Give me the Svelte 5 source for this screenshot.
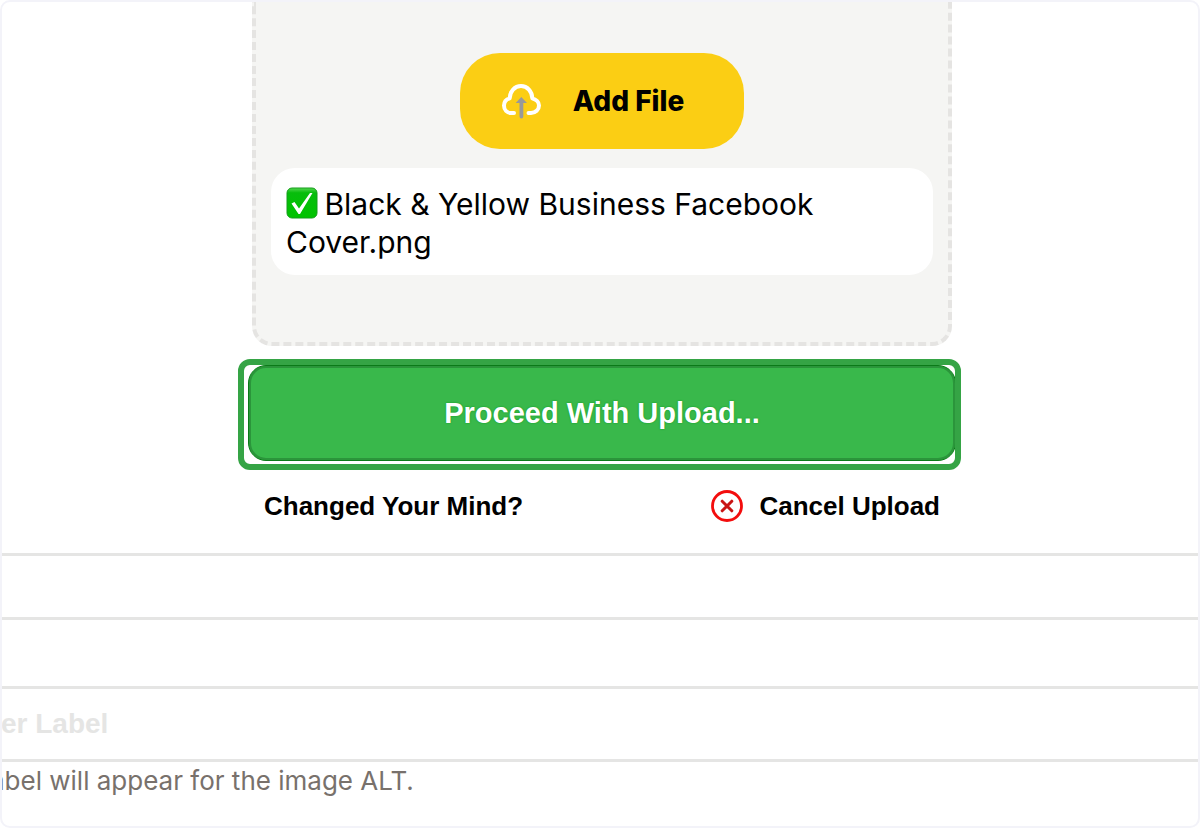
<script>
	let fileName = 'Black & Yellow Business Facebook Cover.png';
	let label = $state('');
</script>

<main>
	<section class="uploader">
		<div class="dropzone">
			<button class="add-file" type="button">
				<svg width="40" height="36" viewBox="0 0 40 36" fill="none" aria-hidden="true">
					<path d="M13 30H10.500C6 30 3 26.700 3 22.500C3 19 5.200 16.300 8.700 15.300C8.800 8.300 13.700 3 20 3C26.300 3 31.200 8.300 31.300 15.300C34.800 16.300 38 19 38 22.500C38 26.700 34.500 30 30 30H27.500" stroke="#fff" stroke-width="4" stroke-linecap="round" stroke-linejoin="round" />
					<path d="M18.500 33.500V20H14.700L20.300 14L26 20H22.300V33.500Q22.300 35.500 20.400 35.500Q18.500 35.500 18.500 33.500Z" fill="#999" />
				</svg>
				<span>Add File</span>
			</button>
			<p class="file">
				<svg class="tick" width="32" height="32" viewBox="0 0 32 32" aria-hidden="true">
					<defs>
						<linearGradient id="tickFill" x1="0" y1="0" x2="0" y2="1">
							<stop offset="0" stop-color="#54d64f" />
							<stop offset="0.16" stop-color="#07bd0c" />
							<stop offset="1" stop-color="#00c300" />
						</linearGradient>
					</defs>
					<rect x="1" y="1" width="30" height="30" rx="5" fill="url(#tickFill)" stroke="#159d1a" />
					<path d="M5.500 16.500L8.500 15L13 21.500L24 6H26.500L14 27H12.500Z" fill="#fff" />
				</svg>
				{fileName}
			</p>
		</div>
		<div class="proceed-wrap">
			<button class="proceed" type="button">Proceed With Upload...</button>
			<div class="ring"></div>
		</div>
		<div class="cancel-row">
			<span>Changed Your Mind?</span>
			<button class="cancel" type="button">
				<svg width="32" height="32" viewBox="0 0 32 32" fill="none" aria-hidden="true">
					<circle cx="16" cy="16" r="14.500" stroke="#f30d0d" stroke-width="2.800" />
					<path d="M11.200 11.200L20.800 20.800M20.800 11.200L11.200 20.800" stroke="#c91414" stroke-width="3" stroke-linecap="round" />
				</svg>
				Cancel Upload
			</button>
		</div>
	</section>
	<div class="row"></div>
	<div class="row"></div>
	<div class="row field">
		<input type="text" placeholder="er Label" aria-labelledby="hint" bind:value={label} />
	</div>
	<p class="hint" id="hint">abel will appear for the image ALT.</p>
</main>

<style>
	:global(body) {
		background: #fff;
	}

	main {
		box-sizing: border-box;
		min-height: 100vh;
		overflow: hidden;
		border: 2px solid #f3f3f9;
		border-radius: 10px;
		color: #000;
		font-family: "Liberation Sans", Arial, sans-serif;
	}

	button {
		border: 0;
		padding: 0;
		color: inherit;
		font-family: inherit;
		cursor: pointer;
	}

	.uploader {
		display: flex;
		flex-direction: column;
		align-items: center;
		padding: 0 0 31px 4px;
	}

	.dropzone {
		box-sizing: border-box;
		display: flex;
		flex-direction: column;
		align-items: center;
		gap: 19px;
		width: 100%;
		max-width: 700px;
		padding: 51px 15px 67px;
		border: 4px dashed #e5e4e2;
		border-top: 0;
		border-radius: 0 0 20px 20px;
		background: #f5f5f3;
	}

	.add-file {
		display: flex;
		align-items: center;
		gap: 32px;
		padding: 0 60px 0 41px;
		height: 96px;
		border-radius: 40px;
		background: #fbce14;
		font: 800 28px/32px Inter, sans-serif;
	}

	.file {
		box-sizing: border-box;
		width: 100%;
		margin: 0;
		padding: 17px 15px 14px;
		border-radius: 24px;
		background: #fff;
		font: 400 30px/38px Inter, sans-serif;
	}

	.tick {
		margin-right: -2px;
		vertical-align: -4px;
	}

	.proceed-wrap {
		position: relative;
		box-sizing: border-box;
		width: 100%;
		max-width: 708px;
		margin-top: 19px;
	}

	.proceed {
		display: block;
		width: 100%;
		height: 96px;
		border: 1px solid #0b7a18;
		border-radius: 18px;
		background: #39b84b;
		box-shadow: inset 0 0 0 2px #2b953b;
		color: #fff;
		font-size: 29px;
		font-weight: 700;
		text-shadow: 0 0 2px #0a9a1c;
	}

	.ring {
		position: absolute;
		inset: -6px -5px -9px -10px;
		border: 6px solid #35a445;
		border-radius: 12px;
		pointer-events: none;
	}

	.cancel-row {
		display: flex;
		align-items: center;
		justify-content: space-between;
		box-sizing: border-box;
		width: 100%;
		max-width: 700px;
		margin-top: 29px;
		padding: 0 12px;
		font-size: 26px;
		line-height: 32px;
		font-weight: 700;
	}

	.cancel {
		display: flex;
		align-items: center;
		gap: 16px;
		background: none;
		font-size: 26px;
		line-height: 32px;
		font-weight: 700;
	}

	.row {
		height: 61px;
		border-top: 3px solid #e5e5e4;
	}

	.row + .row {
		height: 66px;
	}

	.row.field {
		height: 70px;
		border-bottom: 3px solid #e5e5e4;
	}

	input {
		display: block;
		box-sizing: border-box;
		width: 100%;
		height: 100%;
		padding: 0;
		border: 0;
		background: none;
		color: #000;
		font: 700 28px/32px "Liberation Sans", Arial, sans-serif;
		text-indent: -1px;
	}

	input::placeholder {
		color: #e5e5e4;
		opacity: 1;
	}

	.hint {
		margin: 0;
		padding: 2px 0;
		color: #78716c;
		font: 400 26px/34px Inter, sans-serif;
		text-indent: -12px;
	}
</style>
